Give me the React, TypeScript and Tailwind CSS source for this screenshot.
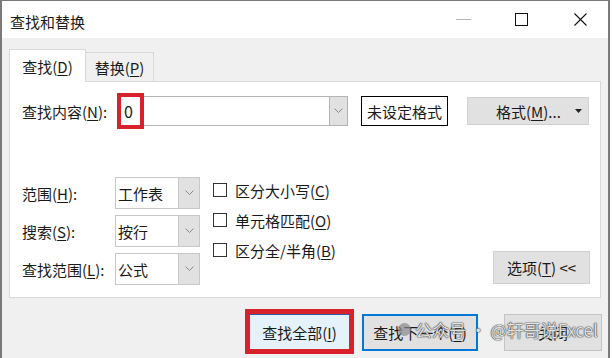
import React from 'react';

const Chevron = () => (
  <svg width="9" height="6" viewBox="0 0 9 6" fill="none">
    <polyline points="0.5,0.5 4.5,4.5 8.5,0.5" stroke="#8a8a8a" strokeWidth="1" />
  </svg>
);

const U = ({ children }: { children: React.ReactNode }) => <span className="underline underline-offset-2">{children}</span>;

const Combo = ({ value }: { value: string }) => (
  <div className="flex h-[32px] w-[85px] border border-[#c8c8c8] bg-white">
    <div className="flex flex-1 items-center pl-[2px]">{value}</div>
    <div className="flex w-[21px] items-center justify-center border-l border-[#c8c8c8] bg-[#e1e1e1]">
      <Chevron />
    </div>
  </div>
);

const Check = ({ label, k }: { label: string; k: string }) => (
  <div className="flex h-[30px] items-center gap-[8px]">
    <div className="h-[14px] w-[14px] border border-[#333] bg-white" />
    <span>
      {label}(<U>{k}</U>)
    </span>
  </div>
);

export default function App() {
  return (
    <div className="relative h-[358px] w-[612px] overflow-hidden bg-white font-['Noto_Sans_CJK_SC',sans-serif] text-[15px] leading-none text-[#1a1a1a]">
      <div className="flex h-[360px] w-[610px] flex-col border-l-2 border-r-2 border-t border-[#7a7a7a] bg-[#f0f0f0]">
        {/* title bar */}
        <div className="flex h-[37px] items-center bg-white">
          <span className="pl-[8px] pt-[4px] text-[15px]">查找和替换</span>
          <div className="ml-auto flex items-center">
            <svg width="16" height="12" viewBox="0 0 16 12" className="mr-[43px]">
              <line x1="0" y1="5.5" x2="15" y2="5.5" stroke="#b5b5b5" strokeWidth="1" />
            </svg>
            <svg width="13" height="13" viewBox="0 0 13 13" className="mr-[46px]">
              <rect x="0.5" y="0.5" width="12" height="12" fill="none" stroke="#111" strokeWidth="1" />
            </svg>
            <svg width="13" height="13" viewBox="0 0 13 13" className="mr-[21px]">
              <line x1="0.5" y1="0.5" x2="12.5" y2="12.5" stroke="#111" strokeWidth="1.1" />
              <line x1="12.5" y1="0.5" x2="0.5" y2="12.5" stroke="#111" strokeWidth="1.1" />
            </svg>
          </div>
        </div>

        {/* tabs */}
        <div className="flex items-end pl-[7px] pt-[11px]">
          <div className="relative z-10 -mb-px flex h-[33px] w-[77px] items-center justify-center border border-b-0 border-[#d9d9d9] bg-white">
            <span>
              查找(<U>D</U>)
            </span>
          </div>
          <div className="flex h-[29px] w-[68px] items-center justify-center border border-b-0 border-l-0 border-[#d9d9d9] bg-[#f0f0f0]">
            <span>
              替换(<U>P</U>)
            </span>
          </div>
        </div>

        {/* panel */}
        <div className="ml-[7px] flex h-[217px] w-[592px] flex-col border border-[#d9d9d9] bg-white">
          <div className="mt-[14px] flex h-[30px] items-center pl-[12px]">
            <span className="w-[95px]">
              查找内容(<U>N</U>):
            </span>
            <div className="relative flex h-[30px] w-[231px] border border-[#b4b4b4] bg-white">
              <div className="flex flex-1 items-center pl-[6px] text-[16px]">0</div>
              <div className="flex w-[18px] items-center justify-center border-l border-[#b4b4b4] bg-[#e1e1e1]">
                <Chevron />
              </div>
              <div className="absolute -left-[1px] -top-[4px] h-[36px] w-[27px] border-[4px] border-[#d7222b]" />
            </div>
            <div className="ml-[13px] flex h-[30px] w-[87px] items-center justify-center border border-black bg-white">
              未设定格式
            </div>
            <div className="ml-[19px] flex h-[28px] w-[122px] items-center border border-[#d0d0d0] bg-[#e1e1e1]">
              <span className="ml-[28px]">
                格式(<U>M</U>)...
              </span>
              <svg width="7" height="4" viewBox="0 0 7 4" className="ml-auto mr-[6px]">
                <polygon points="0,0 7,0 3.5,4" fill="#222" />
              </svg>
            </div>
          </div>

          <div className="mt-[49px] flex pl-[12px]">
            <div className="flex flex-col gap-[6px] pt-[2px]">
              <div className="flex items-center">
                <span className="w-[93px]">
                  范围(<U>H</U>):
                </span>
                <Combo value="工作表" />
              </div>
              <div className="flex items-center">
                <span className="w-[93px]">
                  搜索(<U>S</U>):
                </span>
                <Combo value="按行" />
              </div>
              <div className="flex items-center">
                <span className="w-[93px]">
                  查找范围(<U>L</U>):
                </span>
                <Combo value="公式" />
              </div>
            </div>
            <div className="ml-[13px] flex flex-col">
              <Check label="区分大小写" k="C" />
              <Check label="单元格匹配" k="O" />
              <Check label="区分全/半角" k="B" />
            </div>
            <div className="mb-[1px] ml-auto mr-[10px] flex h-[33px] w-[97px] items-center justify-center self-end border border-[#d0d0d0] bg-[#e1e1e1]">
              选项(<U>T</U>)&nbsp;&lt;&lt;
            </div>
          </div>
        </div>

        {/* bottom buttons */}
        <div className="mt-[16px] flex pr-[6px]">
          <div className="relative ml-auto flex h-[37px] w-[101px] items-center justify-center border border-[#2a5aa8] bg-[#e5f1fb]">
            查找全部(<U>I</U>)
            <div className="absolute -bottom-[4px] -left-[5px] -right-[5px] -top-[6px] border-[5px] border-[#d7222b]" />
          </div>
          <div className="ml-[12px] flex h-[37px] w-[116px] items-center justify-center border-2 border-[#0078d7] bg-[#e1e1e1]">
            查找下一个(<U>F</U>)
          </div>
          <div className="ml-[26px] flex h-[37px] w-[98px] items-center justify-center border border-[#c4c4c4] bg-[#e1e1e1]">
            关闭
          </div>
        </div>
      </div>

      {/* watermark */}
      <div className="absolute left-[398px] top-[321px] flex items-center gap-[4px] text-[17px] text-white/85 [text-shadow:0_0_1px_#333,0_0_1px_#333,0_0_2px_#777]">
        <span className="h-[13px] w-[13px] rounded-full bg-[#8a8a8a]/70" />
        <span>公众号 · @轩哥说Excel</span>
      </div>
    </div>
  );
}
